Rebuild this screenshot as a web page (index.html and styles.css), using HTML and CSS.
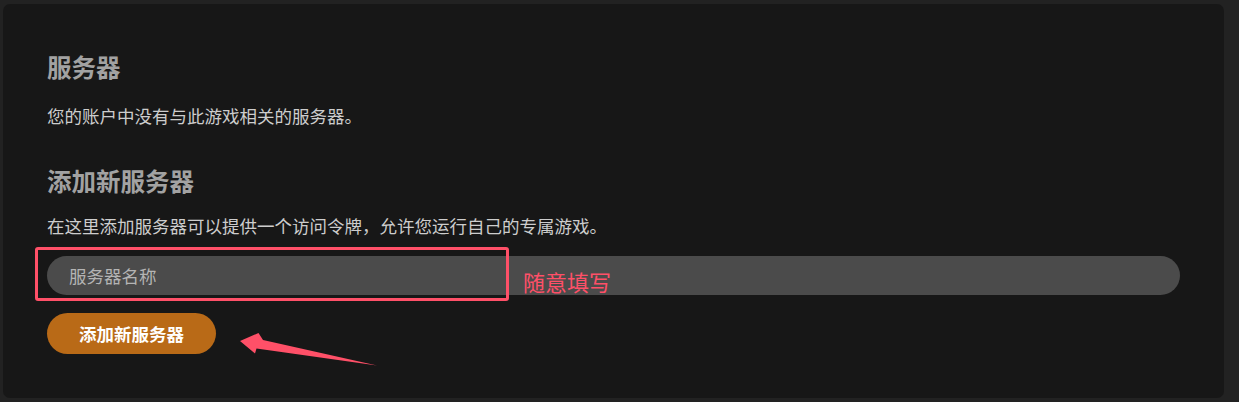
FILE: index.html
```html
<!DOCTYPE html>
<html lang="zh-CN">
<head>
    <meta charset="UTF-8">
    <meta name="viewport" content="width=device-width, initial-scale=1.0">
    <title>服务器</title>
    <link rel="stylesheet" href="styles.css">
</head>
<body>
    <div class="page">
        <div class="card">
            <h2 class="title">服务器</h2>
            <p class="text">您的账户中没有与此游戏相关的服务器。</p>

            <h2 class="title title-add">添加新服务器</h2>
            <p class="text text-add">在这里添加服务器可以提供一个访问令牌，允许您运行自己的专属游戏。</p>
            <input type="text" class="server-input" placeholder="服务器名称">
            <button class="add-button">添加新服务器</button>
        </div>

        <!-- annotations drawn over the screenshot -->
        <div class="mark-box"></div>
        <div class="mark-text">随意填写</div>
        <svg class="mark-arrow" width="1239" height="402" viewBox="0 0 1239 402">
            <polygon points="240,341 258.5,333 263,340 377,365.5 256.5,348.5 255,353.5" fill="#ff5068"/>
        </svg>
    </div>
</body>
</html>
```

FILE: styles.css
```css
body {
    margin: 0;
    padding: 0;
    background-color: #222222;
    font-family: "Noto Sans CJK SC", "Noto Sans", sans-serif;
}
.page {
    position: relative;
    width: 1239px;
    height: 402px;
    padding: 4px 15px 4px 3px;
    box-sizing: border-box;
}
.card {
    height: 100%;
    box-sizing: border-box;
    background-color: #171717;
    border-radius: 7px;
    padding: 47px 44px 0 44px;
    display: flex;
    flex-direction: column;
    align-items: flex-start;
}
.title {
    margin: 0 0 20px 0;
    font-size: 24.5px;
    line-height: 32px;
    font-weight: 700;
    color: #a2a2a2;
}
.title-add {
    margin-bottom: 16px;
}
.text {
    margin: 0 0 36px 0;
    font-size: 17.5px;
    line-height: 26px;
    color: #cdcdcd;
}
.text-add {
    margin-bottom: 17px;
}
.server-input {
    width: 100%;
    height: 39px;
    box-sizing: border-box;
    border: none;
    outline: none;
    border-radius: 20px;
    background-color: #4b4b4b;
    padding: 0 22px;
    font-family: inherit;
    font-size: 17.5px;
    color: #dddddd;
    margin-bottom: 18px;
}
.server-input::placeholder {
    color: #b4b4b4;
}
.add-button {
    height: 41px;
    padding: 0 32px;
    border: none;
    border-radius: 21px;
    background-color: #b96a17;
    color: #ffffff;
    font-family: inherit;
    font-size: 17.5px;
    font-weight: 700;
    cursor: pointer;
}
.mark-box {
    position: absolute;
    left: 35px;
    top: 247px;
    width: 468px;
    height: 48px;
    border: 3px solid #ff5068;
    border-radius: 3px;
}
.mark-text {
    position: absolute;
    left: 523px;
    top: 266px;
    font-size: 22px;
    line-height: 30px;
    color: #ff5068;
}
.mark-arrow {
    position: absolute;
    left: 0;
    top: 0;
    pointer-events: none;
}
```
